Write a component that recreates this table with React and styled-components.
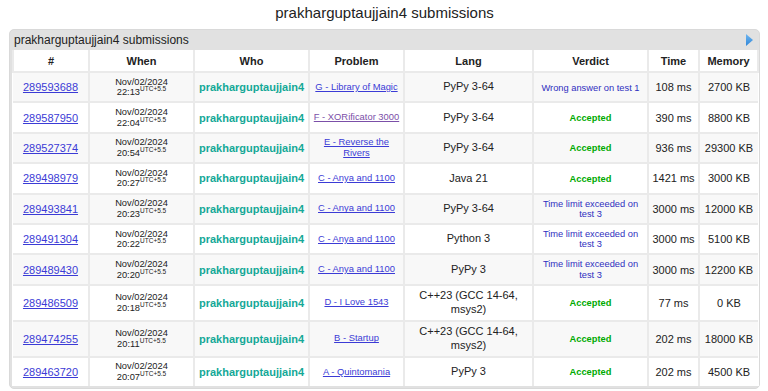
import React from "react";
import styled, { createGlobalStyle } from "styled-components";

const Global = createGlobalStyle`
  html, body { margin: 0; padding: 0; background: #fff; }
  body { font-family: "Liberation Sans", Arial, sans-serif; color: #222; }
`;

const Page = styled.div`
  padding: 4px 8px 0 9px;
`;

const Title = styled.h1`
  margin: 0 0 7px;
  font-size: 15px;
  font-weight: normal;
  text-align: center;
  line-height: 18px;
  color: #222;
`;

const Panel = styled.div`
  background: #e1e1e1;
  border: 1px solid #d9d9d9;
  border-radius: 5px;
  padding: 0 2px 2px 2px;
`;

const PanelHead = styled.div`
  display: flex;
  align-items: center;
  justify-content: space-between;
  height: 20px;
  padding: 0 4px 0 2px;
  font-size: 12px;
  color: #222;
`;

const Table = styled.table`
  width: 100%;
  table-layout: fixed;
  border-collapse: collapse;
  background: #fff;
`;

const Th = styled.th`
  font-size: 11px;
  font-weight: bold;
  color: #222;
  height: 21px;
  padding: 0 3px;
  border: 2px solid #eaeaea;
  border-top: none;
  text-align: center;
  background: #fff;
`;

const Row = styled.tr`
  background: ${(p) => (p.$dark ? "#f8f8f8" : "#fff")};
  &:last-child td { border-bottom: none; }
`;

const Td = styled.td`
  border: 2px solid #eaeaea;
  padding: 3.5px 3px;
  text-align: center;
  vertical-align: middle;
  font-size: ${(p) => p.$size || "11px"};
  line-height: ${(p) => p.$lh || "normal"};
  color: #222;
  &:first-child { border-left: none; }
  &:last-child { border-right: none; }
`;

const IdLink = styled.a`
  color: #3b3bd6;
  text-decoration: underline;
  font-size: 11px;
`;

const ProbLink = styled.a`
  color: ${(p) => (p.$visited ? "#7b4fa8" : "#3b3bd6")};
  text-decoration: underline;
  font-size: 9.4px;
`;

const DateText = styled.div`
  font-size: 9.3px;
  line-height: 10.7px;
  color: #222;
`;

const Sup = styled.sup`
  font-size: 6.5px;
  line-height: 0;
  vertical-align: 4px;
`;

const Who = styled.a`
  color: #14a897;
  font-weight: bold;
  font-size: 11px;
  text-decoration: none;
`;

const Verdict = styled.span`
  font-size: 9.3px;
  line-height: 10.3px;
  display: inline-block;
  color: ${(p) => (p.$ok ? "#0a0" : "#2f2fc0")};
  font-weight: ${(p) => (p.$ok ? "bold" : "normal")};
`;

const Arrow = () => (
  <svg width="7" height="12" viewBox="0 0 7 12">
    <defs>
      <linearGradient id="ag" x1="0" y1="0" x2="0" y2="1">
        <stop offset="0" stopColor="#6fb6f0" />
        <stop offset="1" stopColor="#2f86d8" />
      </linearGradient>
    </defs>
    <polygon points="0,0 7,6 0,12" fill="url(#ag)" />
  </svg>
);

const WA = "Wrong answer on test 1";
const TLE = "Time limit exceeded on test 3";
const AC = "Accepted";

const rows = [
  ["289593688", "22:13", "G - Library of Magic", false, "PyPy 3-64", WA, "108 ms", "2700 KB"],
  ["289587950", "22:04", "F - XORificator 3000", true, "PyPy 3-64", AC, "390 ms", "8800 KB"],
  ["289527374", "20:54", "E - Reverse the Rivers", false, "PyPy 3-64", AC, "936 ms", "29300 KB"],
  ["289498979", "20:27", "C - Anya and 1100", false, "Java 21", AC, "1421 ms", "3000 KB"],
  ["289493841", "20:23", "C - Anya and 1100", false, "PyPy 3-64", TLE, "3000 ms", "12000 KB"],
  ["289491304", "20:22", "C - Anya and 1100", false, "Python 3", TLE, "3000 ms", "5100 KB"],
  ["289489430", "20:20", "C - Anya and 1100", false, "PyPy 3", TLE, "3000 ms", "12200 KB"],
  ["289486509", "20:18", "D - I Love 1543", false, "C++23 (GCC 14-64, msys2)", AC, "77 ms", "0 KB"],
  ["289474255", "20:11", "B - Startup", false, "C++23 (GCC 14-64, msys2)", AC, "202 ms", "18000 KB"],
  ["289463720", "20:07", "A - Quintomania", false, "PyPy 3", AC, "202 ms", "4500 KB"],
];

const widths = [76, 105, 115, 95, 129, 115, 51, 59];
const heads = ["#", "When", "Who", "Problem", "Lang", "Verdict", "Time", "Memory"];

export default function App() {
  return (
    <>
      <Global />
      <Page>
        <Title>prakharguptaujjain4 submissions</Title>
        <Panel>
          <PanelHead>
            <span>prakharguptaujjain4 submissions</span>
            <Arrow />
          </PanelHead>
          <Table>
            <colgroup>
              {widths.map((w, i) => (
                <col key={i} style={{ width: w }} />
              ))}
            </colgroup>
            <thead>
              <tr>
                {heads.map((h) => (
                  <Th key={h}>{h}</Th>
                ))}
              </tr>
            </thead>
            <tbody>
              {rows.map((r, i) => (
                <Row key={r[0]} $dark={i % 2 === 0}>
                  <Td><IdLink href="#">{r[0]}</IdLink></Td>
                  <Td>
                    <DateText>Nov/02/2024</DateText>
                    <DateText>
                      {r[1]}
                      <Sup>UTC+5.5</Sup>
                    </DateText>
                  </Td>
                  <Td><Who href="#">prakharguptaujjain4</Who></Td>
                  <Td $size="9.4px" $lh="10.7px">
                    <ProbLink href="#" $visited={r[3]}>{r[2]}</ProbLink>
                  </Td>
                  <Td $lh="13.5px">{r[4]}</Td>
                  <Td $lh="10.3px">
                    <Verdict $ok={r[5] === AC}>{r[5]}</Verdict>
                  </Td>
                  <Td>{r[6]}</Td>
                  <Td>{r[7]}</Td>
                </Row>
              ))}
            </tbody>
          </Table>
        </Panel>
      </Page>
    </>
  );
}
